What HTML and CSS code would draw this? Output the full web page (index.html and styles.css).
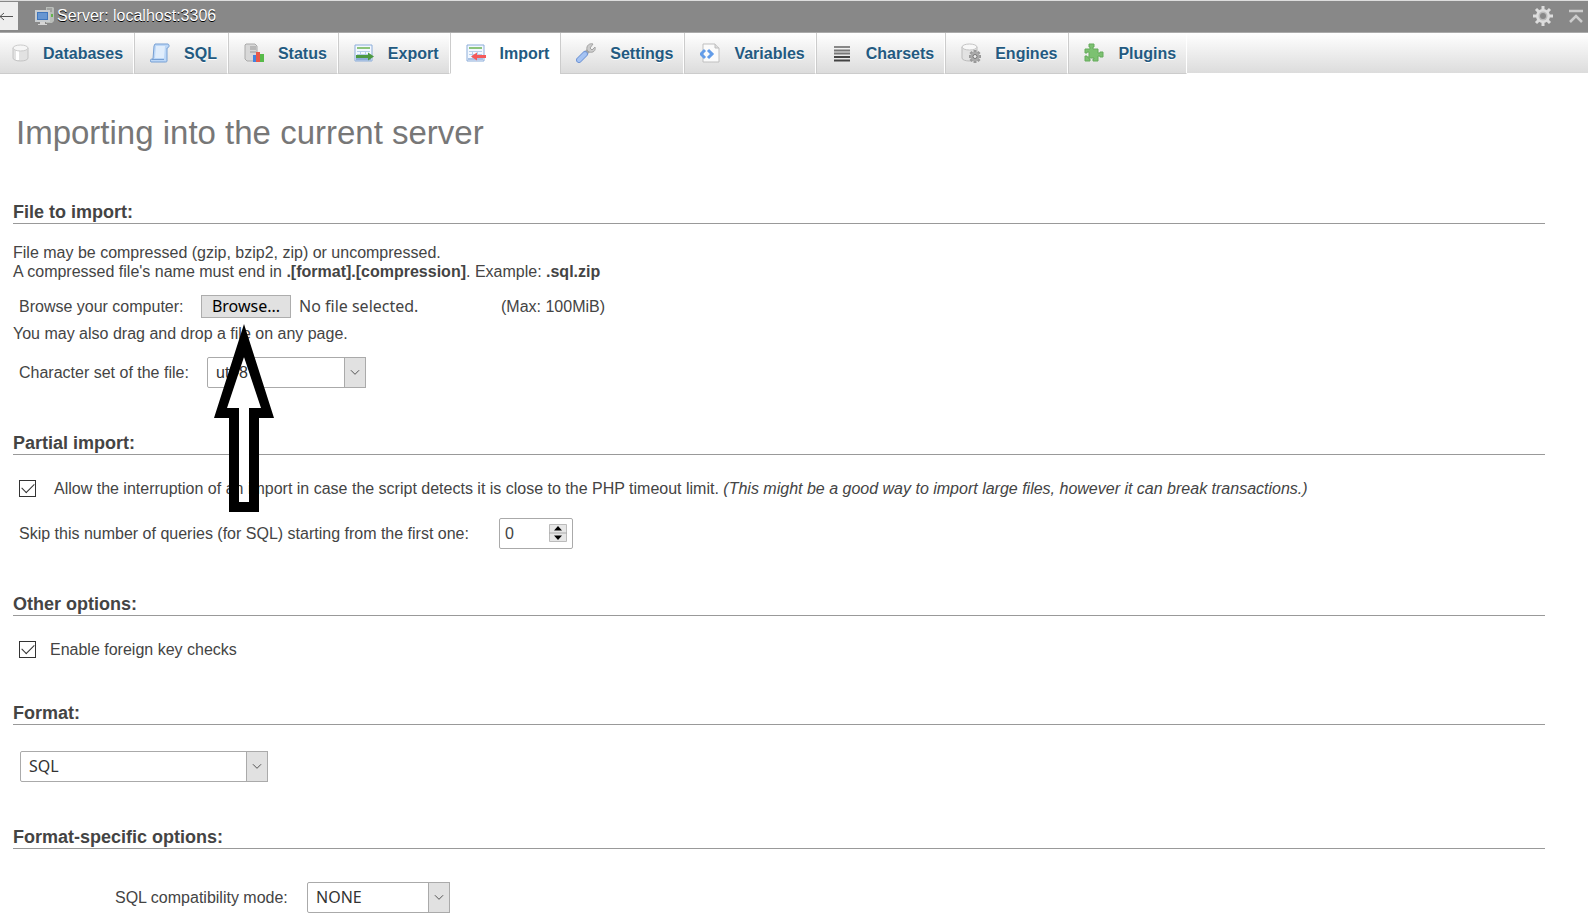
FILE: index.html
```html
<!DOCTYPE html>
<html lang="en">
<head>
<meta charset="utf-8">
<title>Import - localhost:3306</title>
<link rel="stylesheet" href="styles.css">
</head>
<body>
<header class="topbar">
  <button class="collapse" type="button" aria-label="Hide panel"><svg width="18" height="28" viewBox="0 0 18 28"><path d="M-1 14.500H13M4 11L0 14.500L4 18" fill="none" stroke="#555"/></svg></button>
  <a class="crumb" href="#">
    <svg width="20" height="20" viewBox="0 0 20 20"><path d="M11 1h7l1 1v13l-2 2h-6z" fill="#b9bdb9"/><path d="M12 3h5M12 5h5" stroke="#888"/><path d="M16 8h2v3h-2z" fill="#63b34e"/><path d="M0 4h15v12H0z" fill="#c9cdd0"/><path d="M2 6h11v8H2z" fill="#3f76bd"/><path d="M3 7h9v6H3z" fill="#6696d2"/><path d="M5 16h5v2h2v1H3v-1h2z" fill="#d5d5d5"/></svg>
    <span>Server: localhost:3306</span>
  </a>
  <span class="tools">
    <button type="button" aria-label="Page settings"><svg width="20" height="20" viewBox="0 0 20 20"><g stroke="#ddd" stroke-width="3"><path d="M10 0v20M0 10h20M3 3l14 14M17 3L3 17"/></g><circle cx="10" cy="10" r="7" fill="#ddd"/><circle cx="10" cy="10" r="4.500" fill="#bbb"/><circle cx="10" cy="10" r="3" fill="#888"/></svg></button>
    <button type="button" aria-label="Scroll to top"><svg width="16" height="16" viewBox="0 0 16 16"><path d="M1 3h14M2 14l6-6 6 6" fill="none" stroke="#ccc" stroke-width="2.500"/></svg></button>
  </span>
</header>
<nav class="tabs">
  <a href="#"><svg viewBox="0 0 20 20"><path d="M2 5v10c0 4 15 4 15 0V5z" fill="#e2e2e2" stroke="#c4c4c4"/><path d="M5 8h3v9H5z" fill="#fff"/><ellipse cx="9.500" cy="5" rx="7.500" ry="3" fill="#f6f6f6" stroke="#ccc"/></svg>Databases</a>
  <a href="#"><svg viewBox="0 0 20 20"><path d="M5 1h13c2 1 1 4-1 4v13c0 1-1 1-2 1H1c-1-1-1-3 1-3h1L4 3z" fill="#bcd7f7" stroke="#769fd3"/><path d="M6 3h9l-1 12H5z" fill="#e0edfc"/><path d="M2 16.500h12" stroke="#769fd3"/></svg>SQL</a>
  <a href="#"><svg viewBox="0 0 20 20"><path d="M2 1h9l2 2v15H3l-2-2V2z" fill="#d8d8d8" stroke="#aaa"/><path d="M6 4h6M6 6h6M6 9h6" stroke="#999"/><path d="M9 12h3v7H9z" fill="#4484df"/><path d="M12 9h4v10h-4z" fill="#e95849"/><path d="M16 11h4v8h-4z" fill="#57ba49"/></svg>Status</a>
  <a href="#"><svg viewBox="0 0 20 20"><path d="M1 2h17v16H1z" fill="#f3f8ff" stroke="#8cadd9"/><path d="M3 5h13" stroke="#8cc47b" stroke-width="2"/><path d="M3 8.500h13M3 11.500h13M6.500 8v9M11.500 8v9" stroke="#b6cfea"/><path d="M2 16h15" stroke="#8cadd9" stroke-width="3"/><path d="M2 12h12V9.500l6 4-6 4V15H2z" fill="#4d9a43"/></svg>Export</a>
  <a href="#" class="active" aria-current="page"><svg viewBox="0 0 20 20"><path d="M1 2h17v16H1z" fill="#f3f8ff" stroke="#8cadd9"/><path d="M3 5h13" stroke="#8cc47b" stroke-width="2"/><path d="M3 8.500h13M3 11.500h13M6.500 8v9M11.500 8v9" stroke="#b6cfea"/><path d="M2 16h15" stroke="#a9c3e6" stroke-width="2"/><path d="M20 12h-9V9.500l-6 4 6 4V15h9z" fill="#f45a5a"/></svg>Import</a>
  <a href="#"><svg viewBox="0 0 20 20"><path d="M8 12l5-5" stroke="#a6a6a6" stroke-width="4"/><path d="M17 1c-3-1-7 1-6 6l2 2c4 1 7-1 6-5l-3 3-2-2z" fill="#ccc" stroke="#a3a3a3"/><path d="M3 17l6-6" stroke="#7397d5" stroke-width="6" stroke-linecap="round"/><path d="M3 17l6-6" stroke="#a5c3f3" stroke-width="4" stroke-linecap="round"/></svg>Settings</a>
  <a href="#"><svg viewBox="0 0 20 20"><path d="M3 1h12l4 4v14H3z" fill="#fbfbfb" stroke="#bfbfbf"/><path d="M15 1v4h4" fill="#ddd" stroke="#bfbfbf"/><path d="M5 7l-4 4 4 4M8 7l4 4-4 4" fill="none" stroke="#639ce8" stroke-width="3"/></svg>Variables</a>
  <a href="#"><svg viewBox="0 0 20 20"><path d="M2 4h16" stroke="#888" stroke-width="2"/><path d="M2 7.500h16M2 10.500h16" stroke="#777" stroke-width="2"/><path d="M2 14h16M2 17.500h16" stroke="#444" stroke-width="2"/></svg>Charsets</a>
  <a href="#"><svg viewBox="0 0 20 20"><path d="M1 4v11c0 4 15 4 15 0V4z" fill="#e2e2e2" stroke="#bbb"/><ellipse cx="8.500" cy="4" rx="7.500" ry="3" fill="#f8f8f8" stroke="#c4c4c4"/><path d="M14 7v13M8 13.500h12M9.500 9l9 9M18.500 9l-9 9" stroke="#999" stroke-width="3"/><circle cx="14" cy="13.500" r="4.500" fill="#aaa"/><circle cx="14" cy="13.500" r="2" fill="#eee" stroke="#777"/></svg>Engines</a>
  <a href="#"><svg viewBox="0 0 20 20"><path d="M1 6h5V4H5V1h5v3H9v2h5v4h2V9h3v5h-3v-1h-2v5H9v-2h1v-1H5v1h1v2H1v-5h2v1h2V9H3v1H1z" fill="#7cc171" stroke="#66ab5c"/></svg>Plugins</a>
</nav>
<main>
  <h1>Importing into the current server</h1>
  <form>
    <section>
      <h2>File to import:</h2>
      <p>File may be compressed (gzip, bzip2, zip) or uncompressed.<br>A compressed file's name must end in <b>.[format].[compression]</b>. Example: <b>.sql.zip</b></p>
      <div class="row upload">
        <label for="file">Browse your computer:</label>
        <span class="picker"><input id="file" type="file" class="native-file" tabindex="-1"><button type="button" class="browse" onclick="document.getElementById('file').click()">Browse...</button><span class="sys">No file selected.</span></span>
        <span>(Max: 100MiB)</span>
      </div>
      <p class="drop">You may also drag and drop a file on any page.</p>
      <div class="row charset">
        <label for="charset">Character set of the file:</label>
        <span class="select w-charset"><select id="charset"><option>utf-8</option></select><svg viewBox="0 0 22 30"><path d="M6.500 12.500l4.500 4.500 4.500-4.500"/></svg></span>
      </div>
    </section>
    <section>
      <h2>Partial import:</h2>
      <div class="row check wide"><input type="checkbox" id="interrupt" checked><label for="interrupt">Allow the interruption of an import in case the script detects it is close to the PHP timeout limit. <i>(This might be a good way to import large files, however it can break transactions.)</i></label></div>
      <div class="row skip">
        <label for="skip">Skip this number of queries (for SQL) starting from the first one:</label>
        <span class="number"><input id="skip" type="number" value="0"><svg width="18" height="18" viewBox="0 0 18 18"><path d="M.5.5h17v17H.5z" fill="#e6e6e6" stroke="#bbb"/><path d="M0 9h18" stroke="#aaa"/><path d="M9 2l4 4.500H5zM9 16l4-4.500H5z" fill="#000"/></svg></span>
      </div>
    </section>
    <section class="tight">
      <h2>Other options:</h2>
      <div class="row check"><input type="checkbox" id="fk" checked><label for="fk">Enable foreign key checks</label></div>
    </section>
    <section>
      <h2>Format:</h2>
      <div class="row format"><span class="select w-format"><select id="format" class="sys" aria-label="Format"><option>SQL</option></select><svg viewBox="0 0 22 30"><path d="M6.500 12.500l4.500 4.500 4.500-4.500"/></svg></span></div>
    </section>
    <section>
      <h2>Format-specific options:</h2>
      <div class="row compat">
        <label for="compat">SQL compatibility mode:</label>
        <span class="select w-compat"><select id="compat" class="sys"><option>NONE</option></select><svg viewBox="0 0 22 30"><path d="M6.500 12.500l4.500 4.500 4.500-4.500"/></svg></span>
      </div>
    </section>
  </form>
</main>
<svg class="pointer" width="60" height="188" viewBox="0 0 60 188"><path d="M18 60h24v6H18zM24 126h12v8H24z" fill="#fff"/><path fill-rule="evenodd" d="M30 0L60 94H45V188H15V94H0zM30 33L13 84H25V178H35V84H47z"/></svg>
</body>
</html>
```
FILE: styles.css
```css
* { box-sizing: border-box; }
body {
  margin: 0;
  background: #fff;
  color: #444;
  font: 16px/19px "Liberation Sans", Arial, sans-serif;
  position: relative;
}
button, input, select { font: inherit; color: inherit; margin: 0; }
h1, h2, p { margin: 0; }

.topbar {
  display: flex;
  align-items: center;
  height: 33px;
  padding-bottom: 2px;
  background: #888;
  border-top: 1px solid #ddd;
  border-bottom: 1px solid #aaa;
}
.collapse {
  width: 18px;
  height: 28px;
  padding: 0;
  border: 0;
  background: #eee;
}
.collapse svg { display: block; }
.crumb {
  display: flex;
  align-items: center;
  gap: 2px;
  margin-left: 17px;
  color: #fff;
  text-decoration: none;
  text-shadow: 0 1px 0 #000;
}
.tools { display: flex; align-items: center; gap: 15px; margin-left: auto; margin-right: 4px; }
.tools button { display: flex; padding: 0; border: 0; background: none; }

.tabs {
  display: flex;
  height: 40px;
  background: linear-gradient(#fff, #dcdcdc);
}
.tabs a {
  display: flex;
  align-items: center;
  gap: 14px;
  height: 41px;
  padding: 0 10px 0 15px;
  border-left: 1px solid #ccc;
  border-right: 1px solid #fff;
  border-bottom: 1px solid #ccc;
  background: linear-gradient(#fff, #dcdcdc);
  color: #235a81;
  font-weight: bold;
  text-decoration: none;
  text-shadow: 0 1px 0 #fff;
}
.tabs a:first-child { gap: 12px; padding-left: 11px; border-left: 0; }
.tabs a.active { background: #fff; border-bottom-color: #fff; }
.tabs svg { width: 20px; height: 20px; }

main { padding: 37px 43px 6px 13px; }
h1 {
  padding-left: 3px;
  margin-bottom: 46px;
  color: #777;
  font-size: 33px;
  font-weight: normal;
  line-height: 46px;
}
section { margin-bottom: 45px; }
section.tight { margin-bottom: 40px; }
section:last-child { margin-bottom: 0; }
h2 {
  border-bottom: 1px solid #999;
  margin-bottom: 19px;
  font-size: 18px;
  line-height: 21px;
}
.row { display: flex; align-items: center; padding-left: 6px; }
.upload { margin-top: 7px; height: 36px; }
.upload label { min-width: 168px; }
.picker { display: flex; align-items: center; gap: 8px; width: 300px; margin-left: 14px; position: relative; }
.native-file { position: absolute; width: 1px; height: 1px; opacity: 0; }
.browse {
  width: 90px;
  height: 23px;
  padding: 0;
  border: 1px solid #adadad;
  background: #e1e1e1;
  color: #000;
  line-height: 20px;
}
.browse, .sys { font-family: "Noto Sans", sans-serif; font-size: 16px; }
.charset { margin-top: 14px; }
.charset label { min-width: 174px; }

.select { position: relative; display: flex; height: 31px; }
.select select {
  appearance: none;
  width: 100%;
  padding: 0 30px 0 8px;
  border: 1px solid #aaa;
  border-radius: 2px;
  background: #fff;
  color: #333;
}
.select svg {
  position: absolute;
  top: 0;
  right: 0;
  width: 22px;
  height: 31px;
  border: 1px solid #aaa;
  background: #e1e1e1;
  fill: none;
  stroke: #444;
  pointer-events: none;
}
.w-charset { width: 159px; margin-left: 14px; }
.w-format { width: 248px; }
.w-compat { width: 143px; margin-left: 14px; }

.check { height: 28px; gap: 14px; }
.wide { gap: 18px; }
.check input {
  appearance: none;
  width: 17px;
  height: 17px;
  border: 1px solid #333;
  background: #fff;
  display: grid;
  place-items: center;
}
.check input:checked::before {
  content: "";
  width: 11px;
  height: 6px;
  margin-bottom: 4px;
  border: solid #333;
  border-width: 0 0 1px 1px;
  rotate: -45deg;
}
.skip { margin-top: 16px; }
.skip label { min-width: 462px; }
.number { position: relative; display: flex; width: 74px; height: 31px; margin-left: 18px; }
.number input {
  appearance: textfield;
  width: 100%;
  padding: 0 28px 0 5px;
  border: 1px solid #aaa;
  border-radius: 2px;
}
.number input::-webkit-inner-spin-button { display: none; }
.number svg { position: absolute; right: 6px; top: 6px; }
.format { margin-top: 26px; padding-left: 7px; }
.compat { padding-left: 102px; margin-top: 33px; }
.compat label { min-width: 178px; }

.pointer { position: absolute; left: 214px; top: 324px; pointer-events: none; }
```
